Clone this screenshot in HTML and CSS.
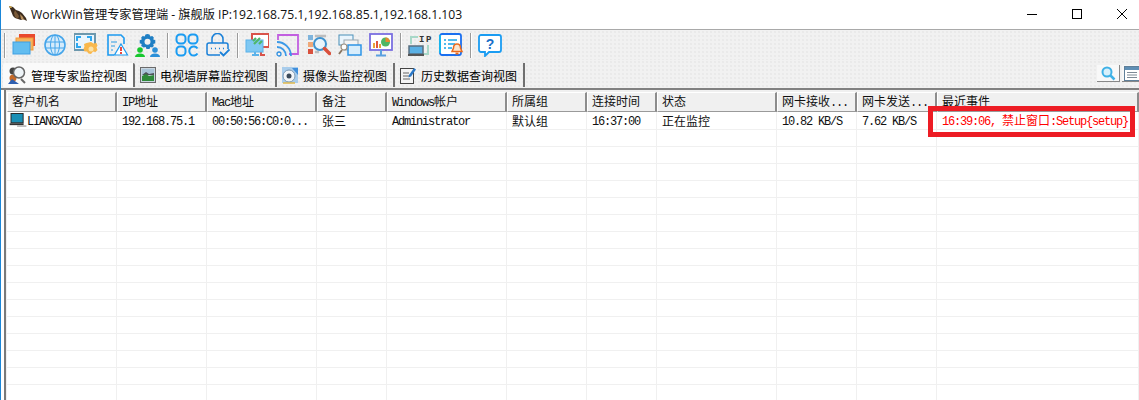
FILE: index.html
```html
<!DOCTYPE html>
<html lang="zh">
<head>
<meta charset="utf-8">
<title>WorkWin管理专家管理端</title>
<link rel="stylesheet" href="styles.css">
</head>
<body>
<div class="window">
  <header class="titlebar">
    <svg class="logo" width="18" height="16" viewBox="0 0 18 16"><path d="M0 0l4 1 3 3 3 1 3 2 4 5 1 3-4-2-2 1-3-1-3-1-2-2-2-5z" fill="#3d2c1e"/><path d="M6 4l4 6-1 3-3-2-1-4z" fill="#7a5a38"/><path d="M11 8l3 3 1 3-3-1z" fill="#b78f5c"/><path d="M0 0l2 0 1 2-2 0z" fill="#c9a24a"/></svg>
    <span class="title">WorkWin管理专家管理端 - 旗舰版 IP:192.168.75.1,192.168.85.1,192.168.1.103</span>
    <div class="controls">
      <svg width="10" height="10" viewBox="0 0 10 10"><path d="M0 5.500h10" stroke="#000"/></svg>
      <svg width="10" height="10" viewBox="0 0 10 10"><rect x=".5" y=".5" width="9" height="9" fill="none" stroke="#000"/></svg>
      <svg width="10" height="10" viewBox="0 0 10 10"><path d="M0 0l10 10M10 0L0 10" stroke="#000"/></svg>
    </div>
  </header>

  <nav class="toolbar">
    <i class="sep"></i>
    <button class="tool"><svg width="24" height="24" viewBox="0 0 24 24"><rect x="7" y="1" width="16" height="12" fill="#e9492e"/><rect x="4" y="5" width="17" height="12" fill="#f6b45e" stroke="#ef9a3a"/><rect x="1" y="9" width="17" height="12" fill="#62bdf0" stroke="#3f9fe2"/></svg></button>
    <button class="tool"><svg width="24" height="24" viewBox="0 0 24 24"><circle cx="12" cy="12" r="10" fill="#d5ebfb" stroke="#45a5ea" stroke-width="1.600"/><ellipse cx="12" cy="12" rx="4.500" ry="10" fill="none" stroke="#45a5ea"/><path d="M12 2v20M2.500 9h19M2.500 15h19" stroke="#45a5ea" fill="none"/></svg></button>
    <button class="tool"><svg width="24" height="24" viewBox="0 0 24 24"><rect x="0" y="1" width="21" height="16" fill="#eaf5fd" stroke="#6d98ad" stroke-width="2"/><path d="M3 8V4h4M17 8V4h-4M3 10v4h4" fill="none" stroke="#2fa8ef" stroke-width="2"/><path d="M17 9l2.500 1.500 3-.5 1 2.500-1 2 1 2.500-2 2-2.500-.5-2 2.500-2.500-.5-1.500-2-2.500 0-1-2.500 1-2.500-.5-2.500 2.500-1z" fill="#f9b84c"/><circle cx="17" cy="16" r="2.500" fill="#fbe2a8"/></svg></button>
    <button class="tool"><svg width="24" height="24" viewBox="0 0 24 24"><path d="M9 22H3V2h13l3 3v6" fill="none" stroke="#1e9bf0" stroke-width="1.600"/><path d="M6 9h6M6 13h4M6 17h2" stroke="#6cb6e6" stroke-width="1.300"/><path d="M16 11l6.500 11H9.500z" fill="#fff" stroke="#1e9bf0" stroke-width="1.200"/><path d="M16 14v4" stroke="#e8342a" stroke-width="1.800"/><path d="M16 19v2" stroke="#e8342a" stroke-width="1.800"/></svg></button>
    <button class="tool"><svg width="25" height="24" viewBox="0 0 25 24"><path d="M12.500 1l2 .5.8 2 2-.5 1.500 1.500-.5 2 2 .8v3l-2 .8.5 2-1.500 1.500-2-.5-.8 2h-3l-.8-2-2 .5L6.200 13l.5-2-2-.8v-3l2-.8-.5-2L7.700 3l2 .5.8-2z" fill="#1f7fc4"/><circle cx="12.500" cy="8.700" r="3" fill="#f0f0f0"/><circle cx="5" cy="17" r="2.800" fill="#16c72e"/><path d="M0 24c0-2 2-3.500 5-3.500s5 1.500 5 3.500z" fill="#16c72e"/><circle cx="20" cy="17" r="2.800" fill="#2a8fd8"/><path d="M15 24c0-2 2-3.500 5-3.500s5 1.500 5 3.500z" fill="#2a8fd8"/></svg></button>
    <i class="sep"></i>
    <button class="tool"><svg width="24" height="24" viewBox="0 0 24 24" fill="none" stroke="#1a9cf2" stroke-width="2"><rect x="1.500" y="1.500" width="9" height="9" rx="3.500"/><rect x="13.500" y="1.500" width="9" height="9" rx="3.500"/><rect x="1.500" y="13.500" width="9" height="9" rx="3.500"/><path d="M22.500 15.500a4.500 4.500 0 1 0 0 5"/></svg></button>
    <button class="tool"><svg width="24" height="24" viewBox="0 0 24 24" fill="none" stroke="#1a80d8" stroke-width="1.500"><path d="M6 10V6a5.500 5.500 0 0 1 11 0v4"/><path d="M14 22H3a2 2 0 0 1-2-2v-8a2 2 0 0 1 2-2h17a2 2 0 0 1 2 2v4"/><path d="M5 15.500h1M9 15.500h1M13 15.500h1M17 15.500h1"/><path d="M14 19l3.500 3.500 6-6" stroke-width="1.800"/></svg></button>
    <i class="sep"></i>
    <button class="tool"><svg width="24" height="24" viewBox="0 0 24 24"><rect x="7" y="1" width="17" height="13" fill="#fff" stroke="#d9534a" stroke-width="2"/><path d="M16 19v3h4" fill="none" stroke="#d9534a" stroke-width="2"/><rect x="1" y="7" width="17" height="12" fill="#7fc8f3" stroke="#5ab2ea"/><path d="M7 22h7M10 19v3" stroke="#5ab2ea" stroke-width="2"/><path d="M9 11l6-6M14 11l3-3M8 8l3-3" stroke="#4fb76a" stroke-width="2.200"/></svg></button>
    <button class="tool"><svg width="24" height="24" viewBox="0 0 24 24" fill="none"><path d="M2 7V2h20v19H13" stroke="#c25fe0" stroke-width="1.800"/><path d="M1 14a9 9 0 0 1 9 9M1 9a14 14 0 0 1 14 14" stroke="#3b9ae8" stroke-width="1.800"/><circle cx="3" cy="21" r="2" stroke="#2f8fe0" stroke-width="1.300"/></svg></button>
    <button class="tool"><svg width="24" height="24" viewBox="0 0 24 24"><rect x="1" y="2" width="5" height="5" fill="#7fb4dc"/><rect x="1" y="9" width="5" height="5" fill="#f0a878"/><rect x="1" y="16" width="5" height="5" fill="#d9503c"/><path d="M8 3h11M8 19h4" stroke="#bdbdbd" stroke-width="2.500"/><circle cx="13" cy="11" r="6" fill="#eaf4fb" stroke="#3f93cf" stroke-width="2"/><path d="M17.500 15.500l5 5" stroke="#d9503c" stroke-width="3.500" stroke-linecap="round"/></svg></button>
    <button class="tool"><svg width="24" height="24" viewBox="0 0 24 24"><rect x="1" y="2" width="14" height="10" fill="#eaf5fd" stroke="#4a8fb8"/><rect x="6" y="7" width="14" height="10" fill="#f4f4f4" stroke="#9aa8b0"/><rect x="10" y="12" width="13" height="10" fill="#d8edfb" stroke="#2d94e6" stroke-width="1.500"/><circle cx="6" cy="14" r="3" fill="#fff" stroke="#9a8f80" stroke-width="1.200"/><path d="M4 17l-3 4" stroke="#8a7560" stroke-width="1.800"/></svg></button>
    <button class="tool"><svg width="24" height="24" viewBox="0 0 24 24"><rect x="1" y="1" width="22" height="16" fill="#fff" stroke="#7b6fe0" stroke-width="1.800"/><rect x="4" y="10" width="2" height="5" fill="#e8a33a"/><rect x="7" y="8" width="2" height="7" fill="#e2553b"/><rect x="10" y="11" width="2" height="4" fill="#e8a33a"/><circle cx="16.500" cy="9" r="4.500" fill="#4fb765"/><path d="M16.500 9V4.500a4.500 4.500 0 0 1 4.500 4.500z" fill="#e88a2e"/><path d="M7 22.500h10M12 17v5" stroke="#5aa0e0" stroke-width="2"/></svg></button>
    <i class="sep"></i>
    <button class="tool"><svg width="24" height="24" viewBox="0 0 24 24"><path d="M3 11V4h7M20 12v9H9" fill="none" stroke="#a8d8c8" stroke-width="2"/><rect x="1" y="13" width="14" height="8" fill="#5ab0e4" stroke="#5a6f80" stroke-width="1.500"/><path d="M0 22h16" stroke="#555" stroke-width="2"/><text x="11" y="9" class="ip">I</text><text x="18" y="9" class="ip">P</text></svg></button>
    <button class="tool"><svg width="24" height="24" viewBox="0 0 24 24"><rect x="1" y="1" width="21" height="21" rx="2" fill="#fff" stroke="#1a6ff0" stroke-width="1.800"/><path d="M1 2v18" stroke="#18b4ec" stroke-width="2"/><path d="M5 7h2M9 7h9M5 11h2M9 11h7M5 15h2M9 15h4" stroke="#18a4e8" stroke-width="1.600"/><path d="M18 11c-2.500 0-3.500 1.500-3.500 4l-1.500 3.500h10L21.500 15c0-2.500-1-4-3.500-4z" fill="#fbe6d0" stroke="#ea6b1e" stroke-width="1.500"/><path d="M16.500 20.500h3" stroke="#ea6b1e" stroke-width="2"/></svg></button>
    <i class="sep"></i>
    <button class="tool"><svg width="24" height="24" viewBox="0 0 24 24"><path d="M3 2h18a2 2 0 0 1 2 2v13a2 2 0 0 1-2 2H11l-4 4v-4H3a2 2 0 0 1-2-2V4a2 2 0 0 1 2-2z" fill="#fff" stroke="#1a9cf2" stroke-width="1.800"/><text x="12" y="15.500" class="help">?</text></svg></button>
  </nav>

  <div class="tabbar">
    <div class="tab active"><svg width="18" height="18" viewBox="0 0 18 18"><circle cx="5" cy="12" r="3.500" fill="#c46a2a"/><circle cx="5" cy="5" r="3.500" fill="#444"/><path d="M0 18l4-5 7 5z" fill="#2f5fb0"/><circle cx="11" cy="6.500" r="5.500" fill="#eef4f8" stroke="#666" stroke-width="1.500"/><path d="M13 13l4 4" stroke="#666" stroke-width="2"/></svg><span>管理专家监控视图</span></div>
    <div class="tab"><svg width="16" height="18" viewBox="0 0 16 18"><rect x=".5" y="1.500" width="15" height="15" fill="#c9d6e0" stroke="#6a6a6a"/><path d="M2 3h12v6H2z" fill="#a9c4d8"/><path d="M2 9l4-3 3 2 5-1v2H2z" fill="#4d5358"/><path d="M2 10l4-2 3 2 5-1v6H2z" fill="#2f8a3a"/></svg><span>电视墙屏幕监控视图</span></div>
    <div class="tab"><svg width="16" height="18" viewBox="0 0 16 18"><rect y="1" width="16" height="16" fill="#a9cdec"/><circle cx="7" cy="10" r="6" fill="#f2f5f8" stroke="#7d99b3"/><circle cx="7" cy="10" r="2.500" fill="#3b4a5a"/><path d="M10 2h6v7z" fill="#3f8fdc"/><path d="M1 17h12" stroke="#e0b84c" stroke-width="1.500"/></svg><span>摄像头监控视图</span></div>
    <div class="tab"><svg width="16" height="18" viewBox="0 0 16 18"><rect x=".5" y="2.500" width="13" height="15" fill="#f4f4f4" stroke="#444"/><path d="M3 7h6M3 10h7M3 13h7" stroke="#666"/><path d="M9 9l5-7 2 1.500-5 7-2.500 1z" fill="#2a78c8"/></svg><span>历史数据查询视图</span></div>
    <div class="tab-tools">
      <button class="sq"><svg width="18" height="17" viewBox="0 0 18 17"><circle cx="8" cy="7" r="4.500" fill="#d8f0fb" stroke="#3fb1e6" stroke-width="2"/><path d="M11.500 10.500l4 4" stroke="#3fb1e6" stroke-width="2.500"/></svg></button>
      <button class="sq"><svg width="16" height="15" viewBox="0 0 16 15"><rect x=".5" y=".5" width="15" height="14" fill="#fff" stroke="#5f7f99"/><path d="M1 1h14v3H1z" fill="#5f8fb5"/><path d="M3 6.500h10M3 9h10M3 11.500h10" stroke="#7d8a96"/></svg></button>
    </div>
  </div>

  <main class="grid-frame">
    <table class="grid">
      <colgroup><col class="c110"><col class="c90"><col class="c110"><col class="c70"><col class="c120"><col class="c80"><col class="c70"><col class="c120"><col class="c80"><col class="c80"><col></colgroup>
      <thead>
        <tr>
          <th>客户机名</th><th><span class="en">IP</span>地址</th><th><span class="en">Mac</span>地址</th><th>备注</th><th><span class="en">Windows</span>帐户</th><th>所属组</th><th>连接时间</th><th>状态</th><th>网卡接收<span class="en">...</span></th><th>网卡发送<span class="en">...</span></th><th>最近事件</th>
        </tr>
      </thead>
      <tbody>
        <tr>
          <td class="host"><svg width="18" height="15" viewBox="0 0 18 15"><rect x="1.500" y=".5" width="13" height="10" fill="#1a8fb5" stroke="#222"/><path d="M0 12h15" stroke="#333" stroke-width="2"/><path d="M8 14h10" stroke="#aaa" stroke-width="1.500"/></svg><span class="en">LIANGXIAO</span></td>
          <td><span class="en">192.168.75.1</span></td><td><span class="en">00:50:56:C0:0...</span></td><td>张三</td><td><span class="en">Administrator</span></td><td>默认组</td><td><span class="en">16:37:00</span></td><td>正在监控</td><td><span class="en">10.82 KB/S</span></td><td><span class="en">7.62 KB/S</span></td><td class="event"><span class="en">16:39:06, </span>禁止窗口<span class="en">:Setup{setup}</span></td>
        </tr>
        <tr><td></td><td></td><td></td><td></td><td></td><td></td><td></td><td></td><td></td><td></td><td></td></tr>
        <tr><td></td><td></td><td></td><td></td><td></td><td></td><td></td><td></td><td></td><td></td><td></td></tr>
        <tr><td></td><td></td><td></td><td></td><td></td><td></td><td></td><td></td><td></td><td></td><td></td></tr>
        <tr><td></td><td></td><td></td><td></td><td></td><td></td><td></td><td></td><td></td><td></td><td></td></tr>
        <tr><td></td><td></td><td></td><td></td><td></td><td></td><td></td><td></td><td></td><td></td><td></td></tr>
        <tr><td></td><td></td><td></td><td></td><td></td><td></td><td></td><td></td><td></td><td></td><td></td></tr>
        <tr><td></td><td></td><td></td><td></td><td></td><td></td><td></td><td></td><td></td><td></td><td></td></tr>
        <tr><td></td><td></td><td></td><td></td><td></td><td></td><td></td><td></td><td></td><td></td><td></td></tr>
        <tr><td></td><td></td><td></td><td></td><td></td><td></td><td></td><td></td><td></td><td></td><td></td></tr>
        <tr><td></td><td></td><td></td><td></td><td></td><td></td><td></td><td></td><td></td><td></td><td></td></tr>
        <tr><td></td><td></td><td></td><td></td><td></td><td></td><td></td><td></td><td></td><td></td><td></td></tr>
        <tr><td></td><td></td><td></td><td></td><td></td><td></td><td></td><td></td><td></td><td></td><td></td></tr>
        <tr><td></td><td></td><td></td><td></td><td></td><td></td><td></td><td></td><td></td><td></td><td></td></tr>
        <tr><td></td><td></td><td></td><td></td><td></td><td></td><td></td><td></td><td></td><td></td><td></td></tr>
        <tr><td></td><td></td><td></td><td></td><td></td><td></td><td></td><td></td><td></td><td></td><td></td></tr>
        <tr><td></td><td></td><td></td><td></td><td></td><td></td><td></td><td></td><td></td><td></td><td></td></tr>
      </tbody>
    </table>
    <div class="highlight"></div>
  </main>
</div>
</body>
</html>
```
FILE: styles.css
```css
* { box-sizing: border-box; }
html, body { margin: 0; height: 400px; overflow: hidden; background: #fff; }
body { font: 12px "Noto Sans CJK SC", "Liberation Sans", sans-serif; color: #000; }

.window { height: 400px; border-left: 1px solid #1a86d8; display: flex; flex-direction: column; overflow: hidden; }

.titlebar { height: 30px; flex: none; display: flex; align-items: center; padding: 0 0 2px 8px; background: #fff; border-bottom: 1px solid #a9a9a9; }
.logo { margin-right: 4px; }
.title { font: 12.200px "Open Sans", "Noto Sans CJK SC", sans-serif; white-space: pre; color: #111; }
.controls { margin-left: auto; display: flex; gap: 35px; padding-right: 12px; }

.toolbar, .tabbar { background: #f1f1f1 radial-gradient(#e9e9e9 .7px, transparent .8px) 0 0 / 4px 4px; }

.toolbar { height: 30px; flex: none; display: flex; align-items: center; padding-left: 3px; }
.sep { width: 2px; height: 25px; flex: none; margin: 0 2px 0 4px; background: linear-gradient(90deg, #9a9a9a 50%, #fff 50%); }
.sep:first-child { margin-left: 0; }
.tool { width: 31px; height: 28px; padding: 0; border: 0; background: none; display: flex; align-items: center; justify-content: center; }
.ip { font: bold 9px "Liberation Mono", monospace; fill: #333; }
.help { font: bold 14px "Liberation Sans", sans-serif; fill: #1a6fc8; text-anchor: middle; }

.tabbar { height: 30px; flex: none; display: flex; align-items: flex-start; padding: 3px 0 0 2px; border-bottom: 2px solid #808080; }
.tab { height: 24px; display: flex; align-items: center; gap: 5px; padding: 0 6px 0 4px; border-right: 2px solid #707070; font-size: 12px; }
.tab + .tab { margin-left: 1px; }
.tab:nth-child(2) { gap: 4px; padding-right: 7px; }
.tab.active { background: #fafafa; border-radius: 2px 2px 0 0; padding: 0 6px 0 5px; }
.tab-tools { margin-left: auto; display: flex; gap: 2px; margin-top: 2px; margin-right: -2px; }
.sq { width: 23px; height: 17px; padding: 0; border: 0; border-right: 1px solid #888; border-bottom: 1px solid #888; background: #f8f8f8; display: flex; align-items: center; justify-content: center; }
.sq + .sq { width: 19px; border-right: 0; }

.grid-frame { position: relative; flex: 1; min-height: 0; padding: 2px 0 0 3px; background: #f0f0f0; border-left: 3px solid #fff; box-shadow: inset 2px 0 #7a7a7a; }
.grid { width: 100%; table-layout: fixed; border-collapse: separate; border-spacing: 0; background: #fff; }
.c110 { width: 110px; } .c90 { width: 90px; } .c70 { width: 70px; } .c120 { width: 120px; } .c80 { width: 80px; }

.grid th { height: 20px; padding: 0 0 2px 4px; font-weight: 400; font-size: 12px; line-height: 14px; text-align: left; white-space: nowrap; overflow: hidden; color: #111; background: #f0f0f0; border-top: 1px solid #fff; border-left: 1px solid #fff; border-right: 2px solid #8c8c8c; border-bottom: 1px solid #9a9a9a; }
.grid td { height: 17px; padding: 0 0 0 5px; white-space: nowrap; overflow: hidden; font-size: 12px; line-height: 14px; color: #111; border-right: 1px solid #f0f0f0; border-bottom: 1px solid #f0f0f0; }
.grid tbody tr:first-child td { height: 18px; }
.grid .host { padding-left: 2px; line-height: 14px; }
.host svg { height: 14px; vertical-align: top; }

.en { font: 12px/1 "Liberation Mono", monospace; letter-spacing: -1.200px; }
.grid .event { color: #f00; overflow: visible; }

.highlight { position: absolute; left: 924px; top: 16px; width: 207px; height: 31px; border: 5px solid #ed1c24; pointer-events: none; }
```
